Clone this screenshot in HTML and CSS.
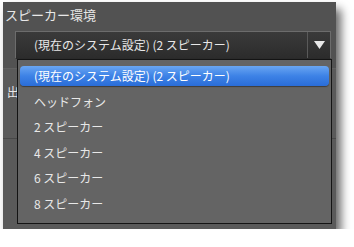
FILE: index.html
```html
<!DOCTYPE html>
<html lang="ja">
<head>
<meta charset="utf-8">
<link rel="stylesheet" href="styles.css">
</head>
<body>
<div class="panel">
  <div class="header">
    <div class="title">スピーカー環境</div>
    <div class="combo">
      <span class="combo-text">(現在のシステム設定) (2 スピーカー)</span>
      <span class="combo-btn"><svg width="11" height="8" viewBox="0 0 11 8"><path d="M0 0H11L5.5 8Z" fill="#e8e8e8"/></svg></span>
    </div>
  </div>
  <div class="section">
    <div class="label">出力</div>
  </div>
  <div class="section2"></div>
  <ul class="list">
    <li class="item selected">(現在のシステム設定) (2 スピーカー)</li>
    <li class="item">ヘッドフォン</li>
    <li class="item">2 スピーカー</li>
    <li class="item">4 スピーカー</li>
    <li class="item">6 スピーカー</li>
    <li class="item">8 スピーカー</li>
  </ul>
</div>
</body>
</html>
```
FILE: styles.css
```css
html, body { margin: 0; padding: 0; background: #fff; }
body { font-family: "Noto Sans CJK JP", "Noto Sans", sans-serif; font-size: 12px; color: #e8e8e8; }
.panel {
  position: relative;
  margin: 2px 0 0 3px;
  width: 333px;
  height: 227px;
  background: #5a5a5a;
  box-shadow: 5px 7px 9px rgba(0,0,0,0.6);
}
.header {
  height: 66px;
  background: #525252;
  padding: 3px 0 0 2px;
  box-sizing: border-box;
}
.title { font-size: 13px; line-height: 20px; height: 26px; }
.combo {
  margin-left: 10px;
  width: 316px;
  height: 28px;
  box-sizing: border-box;
  border: 1px solid #6c6c6c;
  border-bottom-color: #2a2a2a;
  background: linear-gradient(#3a3a3a, #2c2c2c);
  display: flex;
  align-items: center;
}
.combo-text { flex: 1; padding-left: 18px; padding-bottom: 1px; }
.combo-btn {
  width: 22px;
  height: 100%;
  border-left: 1px solid #5a5a5a;
  display: flex;
  align-items: center;
  justify-content: center;
}
.section { height: 69px; border-top: 1px solid #616161; border-bottom: 1px solid #484848; }
.label { padding: 14px 0 0 4px; }
.list {
  position: absolute;
  left: 14px;
  top: 57px;
  width: 315px;
  height: 165px;
  box-sizing: border-box;
  margin: 0;
  padding: 6px 2px 0 2px;
  list-style: none;
  background: #646464;
  border: 1px solid #141414;
}
.item {
  height: 25.5px;
  line-height: 20px;
  padding-left: 14px;
  box-sizing: border-box;
  padding-top: 0;
}
.selected {
  height: 20px;
  margin-bottom: 5.5px;
  padding-top: 0;
  border-radius: 4px;
  color: #fff;
  background: linear-gradient(#6aa6f2, #3d82e6 50%, #2a6dd8);
  box-shadow: 0 1px 1px rgba(0,0,0,0.4);
}
```
